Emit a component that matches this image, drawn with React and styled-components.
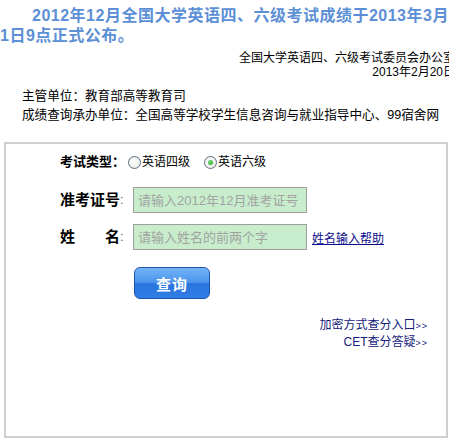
import React from "react";
import styled, { createGlobalStyle } from "styled-components";

const Global = createGlobalStyle`
  html, body { margin: 0; padding: 0; overflow: hidden; background: #fff; }
  body { font-family: "Liberation Sans", "Noto Sans CJK SC", sans-serif; color: #000; }
`;

const Page = styled.div`
  width: 449px;
  height: 440px;
  display: flex;
  flex-direction: column;
`;

const Title = styled.h1`
  margin: 0;
  padding-top: 6px;
  font-size: 16px;
  line-height: 20px;
  font-weight: bold;
  letter-spacing: 0.5px;
  text-indent: 32px;
  color: #5c8fd6;
`;

const Issuer = styled.div`
  margin: 5px -6px 0 0;
  text-align: right;
  font-size: 12px;
  line-height: 14px;
  white-space: nowrap;
`;

const Info = styled.div`
  margin-top: 8px;
  padding-left: 22px;
  font-size: 12.6px;
  line-height: 19px;
  white-space: nowrap;
`;

const Box = styled.div`
  margin: 17px 1px 2px 4px;
  flex: 1;
  border: 2px solid #cfcfcf;
  padding: 8px 18px 0 54px;
  display: flex;
  flex-direction: column;
`;

const Row = styled.div`
  display: flex;
  align-items: center;
  margin-top: ${(p) => p.$gap || 0}px;
`;

const SmallLabel = styled.span`
  font-size: 13px;
  font-weight: bold;
  line-height: 20px;
  margin-right: 3px;
`;

const RadioWrap = styled.label`
  display: inline-flex;
  align-items: center;
  font-size: 12px;
  line-height: 20px;
  margin-right: ${(p) => p.$mr || 0}px;
`;

const Radio = styled.span`
  width: 11px;
  height: 11px;
  border-radius: 50%;
  border: 1px solid #5a6e82;
  background: radial-gradient(circle at 40% 40%, #ffffff 0%, #e6e6e0 100%);
  display: inline-flex;
  align-items: center;
  justify-content: center;
  margin-right: 1px;
  &::after {
    content: "";
    display: ${(p) => (p.$checked ? "block" : "none")};
    width: 5px;
    height: 5px;
    border-radius: 50%;
    background: radial-gradient(circle at 40% 40%, #7fe07f 0%, #1f9a1f 100%);
  }
`;

const BigLabel = styled.span`
  width: 60px;
  display: inline-flex;
  justify-content: space-between;
  font-size: 15px;
  font-weight: bold;
  line-height: 20px;
`;

const Colon = styled.span`
  width: 13px;
  font-size: 13px;
  color: #666;
  line-height: 20px;
`;

const Field = styled.input`
  box-sizing: border-box;
  width: 174px;
  height: 26px;
  margin: 0;
  padding: 0 4px;
  border: 1px solid #9e9e9e;
  background: #c7edcc;
  font-family: "Liberation Sans", "Noto Sans CJK SC", sans-serif;
  font-size: 13px;
  color: #333;
  outline: none;
  &::placeholder { color: #a3a3a3; }
`;

const HelpLink = styled.a`
  margin-left: 5px;
  font-size: 12px;
  color: #0c0c8c;
  text-decoration: underline;
`;

const Button = styled.button`
  margin: 17px 0 0 74px;
  width: 76px;
  height: 32px;
  border: 1px solid #1d55ae;
  border-radius: 6px;
  background: linear-gradient(#74b3f8 0%, #4a94ec 48%, #2a74de 52%, #2f7ce3 100%);
  color: #fff;
  font-family: "Noto Sans CJK SC", sans-serif;
  font-size: 15px;
  font-weight: bold;
  letter-spacing: 1px;
  padding: 0;
  cursor: pointer;
`;

const Links = styled.div`
  margin-top: 18px;
  display: flex;
  flex-direction: column;
  align-items: flex-end;
`;

const NavLink = styled.a`
  font-size: 12px;
  line-height: 16px;
  color: #14207a;
  text-decoration: none;
`;

const Arrows = styled.span`
  font-size: 9px;
  letter-spacing: 1px;
`;

export default function App() {
  return (
    <Page>
      <Global />
      <Title>2012年12月全国大学英语四、六级考试成绩于2013年3月1日9点正式公布。</Title>
      <Issuer>
        全国大学英语四、六级考试委员会办公室
        <br />
        2013年2月20日
      </Issuer>
      <Info>
        主管单位：教育部高等教育司
        <br />
        成绩查询承办单位：全国高等学校学生信息咨询与就业指导中心、99宿舍网
      </Info>
      <Box>
        <Row>
          <SmallLabel>考试类型：</SmallLabel>
          <RadioWrap $mr={14}>
            <Radio />
            英语四级
          </RadioWrap>
          <RadioWrap>
            <Radio $checked />
            英语六级
          </RadioWrap>
        </Row>
        <Row $gap={15}>
          <BigLabel>准考证号</BigLabel>
          <Colon>:</Colon>
          <Field placeholder="请输入2012年12月准考证号" />
        </Row>
        <Row $gap={11}>
          <BigLabel>
            <span>姓</span>
            <span>名</span>
          </BigLabel>
          <Colon>:</Colon>
          <Field placeholder="请输入姓名的前两个字" />
          <HelpLink href="#">姓名输入帮助</HelpLink>
        </Row>
        <Row>
          <Button>查询</Button>
        </Row>
        <Links>
          <NavLink href="#">
            加密方式查分入口<Arrows>&gt;&gt;</Arrows>
          </NavLink>
          <NavLink href="#">
            CET查分答疑<Arrows>&gt;&gt;</Arrows>
          </NavLink>
        </Links>
      </Box>
    </Page>
  );
}
